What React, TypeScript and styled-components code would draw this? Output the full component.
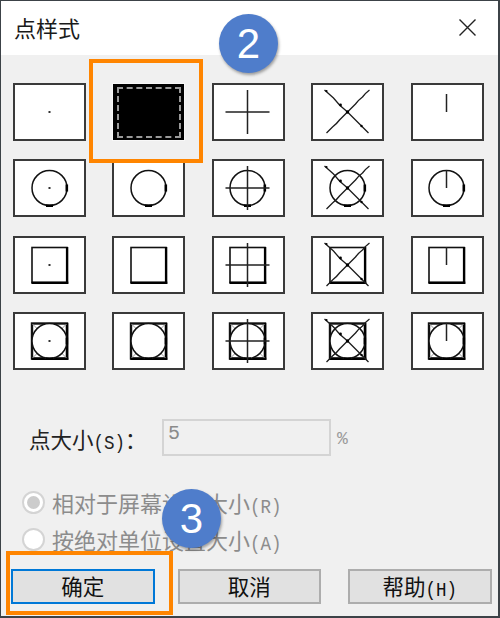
import styled, { createGlobalStyle } from "styled-components";

const GlobalStyle = createGlobalStyle`
  html, body { margin: 0; padding: 0; background: #f0f0f0; }
  * { box-sizing: border-box; }
`;

const Dialog = styled.div`
  position: relative;
  width: 500px;
  height: 618px;
  display: flex;
  flex-direction: column;
  background: #f0f0f0;
  border: 1px solid #3c4247;
  border-bottom-width: 2px;
  border-right-width: 2px;
  overflow: hidden;
  font-family: "Noto Sans CJK SC", sans-serif;
  color: #1a1a1a;
`;

const TitleBar = styled.div`
  height: 54px;
  flex: none;
  display: flex;
  align-items: center;
  justify-content: space-between;
  padding: 0 21px 2px 13px;
  background: #fff;
`;

const Title = styled.span`
  font-size: 22px;
  line-height: 1;
`;

const Content = styled.div`
  flex: 1;
  display: flex;
  flex-direction: column;
  padding: 28px 0 0 12px;
`;

const Grid = styled.div`
  display: grid;
  grid-template-columns: repeat(5, 73px);
  grid-auto-rows: 58px;
  column-gap: 26.4px;
  row-gap: 18.33px;
`;

const Swatch = styled.div<{ $selected?: boolean }>`
  position: relative;
  display: flex;
  align-items: center;
  justify-content: center;
  background: ${(p) => (p.$selected ? "#000" : "#fff")};
  border: ${(p) => (p.$selected ? "1px solid #f8f8f8" : "2px solid #3a3a3a")};

  ${(p) =>
    p.$selected &&
    `&::after {
      content: "";
      position: absolute;
      inset: 3px 3px 2px 4px;
      border: 2px dashed #9a9a9a;
    }`}
`;

const SizeRow = styled.div`
  display: flex;
  align-items: center;
  margin-top: 49px;
  padding-left: 16px;
`;

const Label = styled.label`
  width: 133px;
  padding-top: 3px;
  font-size: 21.5px;
  line-height: 34px;
  color: #222;
  white-space: nowrap;
`;

const Latin = styled.span`
  display: inline-block;
  font-family: "Liberation Mono", monospace;
  font-size: 17.5px;
  line-height: 1;
  transform: scaleY(1.18);
`;

const SizeInput = styled.div`
  width: 169px;
  height: 37px;
  padding: 0 4px;
  border: 2px solid #d4d4d4;
  background: #f0f0f0;
  font-family: "Liberation Mono", monospace;
  font-size: 20px;
  line-height: 26px;
  color: #8a8a8a;
`;

const Unit = styled.span`
  margin: 3px 0 0 6px;
  font-family: "Liberation Mono", monospace;
  font-size: 18px;
  color: #9a9a9a;
`;

const Options = styled.div`
  display: flex;
  flex-direction: column;
  gap: 7px;
  margin-top: 32px;
  padding-left: 9px;
`;

const Option = styled.div`
  display: flex;
  align-items: center;
  gap: 7px;
  height: 30px;
  font-size: 22px;
  color: #8c8c8c;
  white-space: nowrap;
`;

const OptionText = styled.span`
  padding-top: 1px;
  line-height: 24px;
`;

const Radio = styled.span<{ $checked?: boolean }>`
  width: 23px;
  height: 23px;
  flex: none;
  display: flex;
  align-items: center;
  justify-content: center;
  border-radius: 50%;
  border: 2px solid #d4d4d4;
  background: #fff;

  &::after {
    content: "";
    width: 13px;
    height: 13px;
    border-radius: 50%;
    background: ${(p) => (p.$checked ? "#cccccc" : "transparent")};
  }
`;

const Buttons = styled.div`
  display: flex;
  margin-top: 14px;
  margin-left: -2px;
`;

const Button = styled.button<{ $focused?: boolean; $gap?: number }>`
  width: 143.5px;
  height: 35px;
  margin-left: ${(p) => p.$gap ?? 0}px;
  padding: 0;
  background: #e1e1e1;
  border: 2px solid ${(p) => (p.$focused ? "#0078d7" : "#adadad")};
  font-family: "Noto Sans CJK SC", sans-serif;
  font-size: 21.5px;
  line-height: 28px;
  color: #111;
`;

const Callout = styled.div<{ $left: number; $top: number; $width: number; $height: number }>`
  position: absolute;
  left: ${(p) => p.$left}px;
  top: ${(p) => p.$top}px;
  width: ${(p) => p.$width}px;
  height: ${(p) => p.$height}px;
  border: 4px solid #ff8500;
`;

const Badge = styled.div<{ $left: number; $top: number }>`
  position: absolute;
  left: ${(p) => p.$left}px;
  top: ${(p) => p.$top}px;
  width: 59px;
  height: 59px;
  display: flex;
  align-items: center;
  justify-content: center;
  border-radius: 50%;
  background: #4f7dcb;
  box-shadow: 1px 2px 3px rgba(0, 0, 0, 0.35);
  color: #fff;
  font-family: "Liberation Sans", sans-serif;
  font-size: 42px;
  line-height: 1;
`;

type Mark = "dot" | "none" | "plus" | "cross" | "tick";
type Frame = "plain" | "circle" | "square" | "both";

function Ring({ fill = "none" }: { fill?: string }) {
  return (
    <>
      <circle cx="0" cy="0" r="17.5" fill={fill} stroke="#111" strokeWidth="1.5" />
      <rect x="16" y="-3.5" width="2.6" height="7" fill="#000" />
      <rect x="-3.5" y="16.4" width="7" height="2.6" fill="#000" />
    </>
  );
}

function Box({ heavy }: { heavy?: boolean }) {
  return (
    <>
      <rect x="-17.5" y="-17.5" width="35" height="35" fill="#fff" stroke="#111" strokeWidth={heavy ? 2.4 : 1.6} />
      <rect x="16.4" y="-18" width="2.4" height="36.8" fill="#000" />
      <rect x="-18" y="16.6" width="36.8" height="2.4" fill="#000" />
    </>
  );
}

function PointIcon({ mark, frame }: { mark: Mark; frame: Frame }) {
  return (
    <svg width="60" height="54" viewBox="-29.5 -27 60 54">
      {(frame === "square" || frame === "both") && <Box heavy={frame === "both"} />}
      {frame === "both" && <path d="M-17-17L-9-9M17-17L9-9M-17 17L-9 9M17 17L9 9" stroke="#999" strokeWidth="1" />}
      {frame === "circle" && <Ring />}
      {frame === "both" && <Ring fill="#fff" />}
      {mark === "dot" && <rect x="-1" y="-1" width="2" height="2" fill="#333" />}
      {mark === "plus" && <path d="M-22 0H22M0-22V22" stroke="#222" strokeWidth="1.5" fill="none" />}
      {mark === "tick" && <path d="M0 0V-18" stroke="#222" strokeWidth="1.5" fill="none" />}
      {mark === "cross" && (
        <>
          <path
            d="M-23-22L-14-14L-8-7L0 0L8 8L15 15L21 21M22-22Q18-19 15-15Q11-12 8-8L0 0L-8 8Q-11 12-15 15Q-18 18-21 21"
            stroke="#1c1c1c"
            strokeWidth="1.3"
            fill="none"
          />
          <circle cx="-7" cy="-7" r="1.4" fill="#000" />
          <circle cx="0" cy="0" r="1.7" fill="#000" />
          <circle cx="-21" cy="-21" r="1.1" fill="#000" />
          <circle cx="14" cy="14" r="1.2" fill="#000" />
        </>
      )}
    </svg>
  );
}

const marks: Mark[] = ["dot", "none", "plus", "cross", "tick"];
const frames: Frame[] = ["plain", "circle", "square", "both"];

export default function App() {
  return (
    <>
      <GlobalStyle />
      <Dialog>
        <TitleBar>
          <Title>点样式</Title>
          <svg width="19" height="19" viewBox="0 0 19 19">
            <path d="M1.5 1.5L17.5 17.5M17.5 1.5L1.5 17.5" stroke="#222" strokeWidth="1.4" fill="none" />
          </svg>
        </TitleBar>
        <Content>
          <Grid>
            {frames.map((frame) =>
              marks.map((mark) =>
                frame === "plain" && mark === "none" ? (
                  <Swatch key={frame + mark} $selected />
                ) : (
                  <Swatch key={frame + mark}>
                    <PointIcon mark={mark} frame={frame} />
                  </Swatch>
                )
              )
            )}
          </Grid>
          <SizeRow>
            <Label>
              点大小<Latin>(S)</Latin>：
            </Label>
            <SizeInput>5</SizeInput>
            <Unit>%</Unit>
          </SizeRow>
          <Options>
            <Option>
              <Radio $checked />
              <OptionText>
                相对于屏幕设置大小<Latin>(R)</Latin>
              </OptionText>
            </Option>
            <Option>
              <Radio />
              <OptionText>
                按绝对单位设置大小<Latin>(A)</Latin>
              </OptionText>
            </Option>
          </Options>
          <Buttons>
            <Button $focused>确定</Button>
            <Button $gap={23}>取消</Button>
            <Button $gap={27}>
              帮助<Latin>(H)</Latin>
            </Button>
          </Buttons>
        </Content>
        <Callout $left={88} $top={58} $width={114} $height={104} />
        <Callout $left={5} $top={550} $width={167} $height={64} />
        <Badge $left={218} $top={13}>2</Badge>
        <Badge $left={161} $top={488}>3</Badge>
      </Dialog>
    </>
  );
}
